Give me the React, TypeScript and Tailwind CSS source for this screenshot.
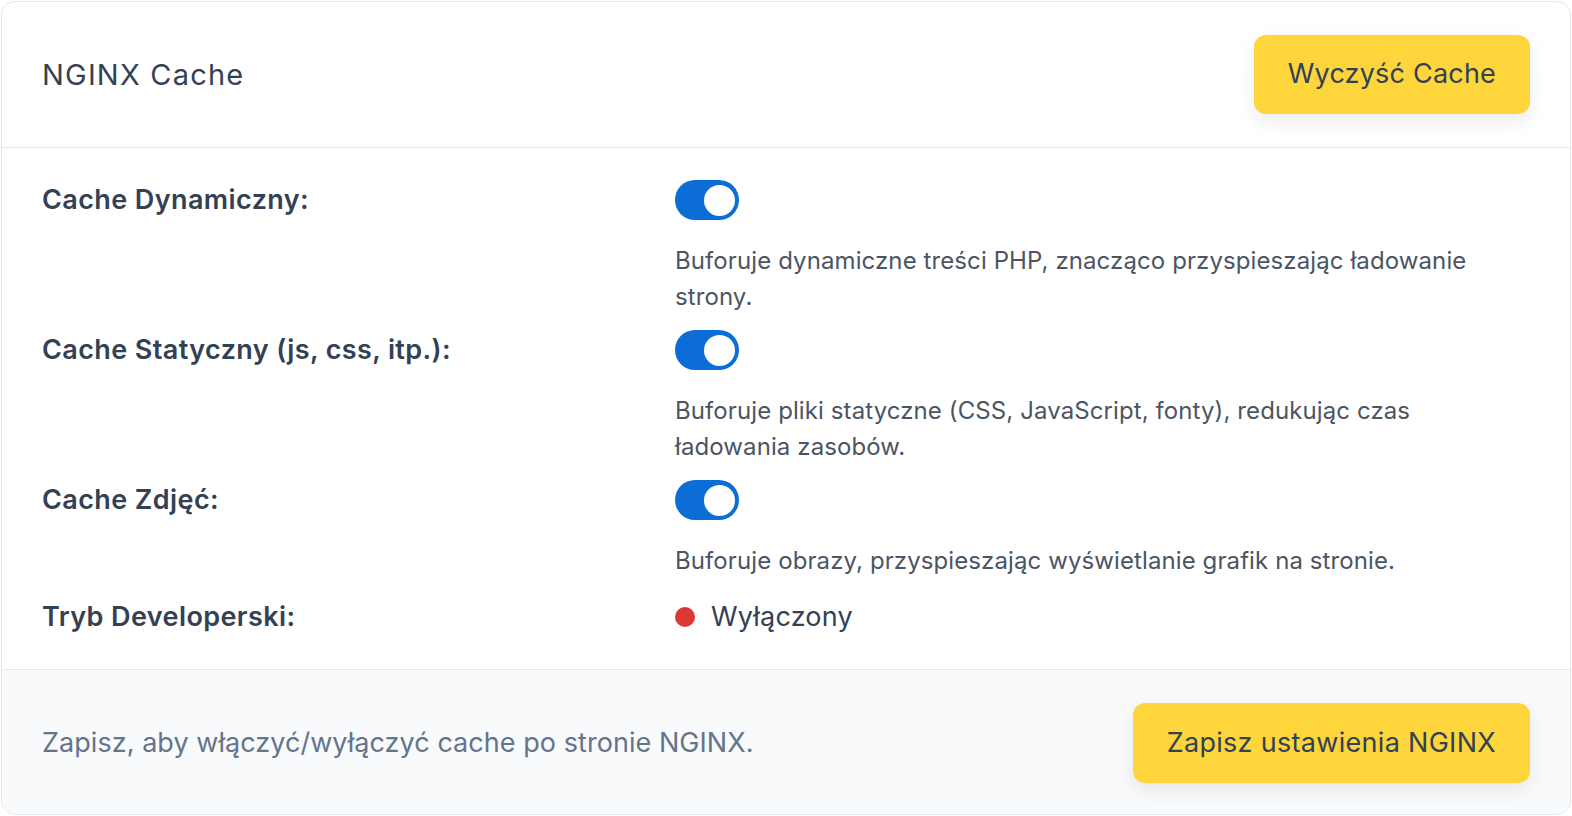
import { useState } from "react";

const rows = [
  {
    label: "Cache Dynamiczny:",
    desc: "Buforuje dynamiczne treści PHP, znacząco przyspieszając ładowanie strony.",
  },
  {
    label: "Cache Statyczny (js, css, itp.):",
    desc: "Buforuje pliki statyczne (CSS, JavaScript, fonty), redukując czas ładowania zasobów.",
  },
  {
    label: "Cache Zdjęć:",
    desc: "Buforuje obrazy, przyspieszając wyświetlanie grafik na stronie.",
  },
];

function Toggle({ on, onClick }: { on: boolean; onClick: () => void }) {
  return (
    <button
      onClick={onClick}
      className={
        "relative w-[64px] h-[40px] rounded-full flex items-center px-[4px] shrink-0 " +
        (on ? "bg-[#0b6dd5] justify-end" : "bg-[#cbd5e1] justify-start")
      }
    >
      <span className="w-[31px] h-[31px] rounded-full bg-white" />
    </button>
  );
}

export default function App() {
  const [state, setState] = useState([true, true, true]);

  return (
    <div
      className="min-h-screen bg-white p-px"
      style={{ fontFamily: "Inter, 'Noto Sans', sans-serif" }}
    >
      <div className="border border-[#e2e8f0] rounded-[14px] overflow-hidden bg-white h-[814px] flex flex-col">
        {/* header */}
        <div className="flex items-center justify-between pl-[40px] pr-[40px] h-[146px] border-b border-[#e2e8f0] shrink-0">
          <h2 className="text-[29px] tracking-[1.2px] text-[#334155] font-normal">NGINX Cache</h2>
          <button className="h-[79px] px-[34px] rounded-[12px] bg-[#fed63b] text-[#334155] text-[27px] tracking-[0.2px] shadow-[0_8px_20px_rgba(0,0,0,0.08)]">
            Wyczyść Cache
          </button>
        </div>

        {/* body */}
        <div className="flex-1 flex flex-col pl-[40px] pr-[40px] pt-[32px]">
          {rows.map((r, i) => (
            <div key={r.label} className="flex mb-[15px]">
              <div className="w-[633px] shrink-0 text-[27px] tracking-[0.4px] font-semibold text-[#334155] leading-[40px]">
                {r.label}
              </div>
              <div className="flex-1 flex flex-col">
                <Toggle
                  on={state[i]}
                  onClick={() => setState((s) => s.map((v, j) => (j === i ? !v : v)))}
                />
                <p className="mt-[23px] text-[24px] tracking-[0.1px] leading-[36px] text-[#4b5563] max-w-[800px]">
                  {r.desc}
                </p>
              </div>
            </div>
          ))}
          <div className="flex items-center mt-[5px]">
            <div className="w-[633px] shrink-0 text-[27px] tracking-[0.4px] font-semibold text-[#334155] leading-[36px]">
              Tryb Developerski:
            </div>
            <div className="flex items-center gap-[16px]">
              <span className="w-[20px] h-[20px] rounded-full bg-[#dc3838]" />
              <span className="text-[27px] tracking-[0.2px] text-[#334155] leading-[36px]">Wyłączony</span>
            </div>
          </div>
        </div>

        {/* footer */}
        <div className="flex items-center justify-between pl-[40px] pr-[40px] pt-[2px] h-[145px] border-t border-[#e2e8f0] bg-[#f8fafc] shrink-0">
          <p className="text-[27px] tracking-[0.05px] text-[#64748b]">
            Zapisz, aby włączyć/wyłączyć cache po stronie NGINX.
          </p>
          <button className="h-[80px] px-[34px] rounded-[12px] bg-[#fed63b] text-[#334155] text-[27px] tracking-[0.3px] shadow-[0_8px_20px_rgba(0,0,0,0.08)]">
            Zapisz ustawienia NGINX
          </button>
        </div>
      </div>
    </div>
  );
}
